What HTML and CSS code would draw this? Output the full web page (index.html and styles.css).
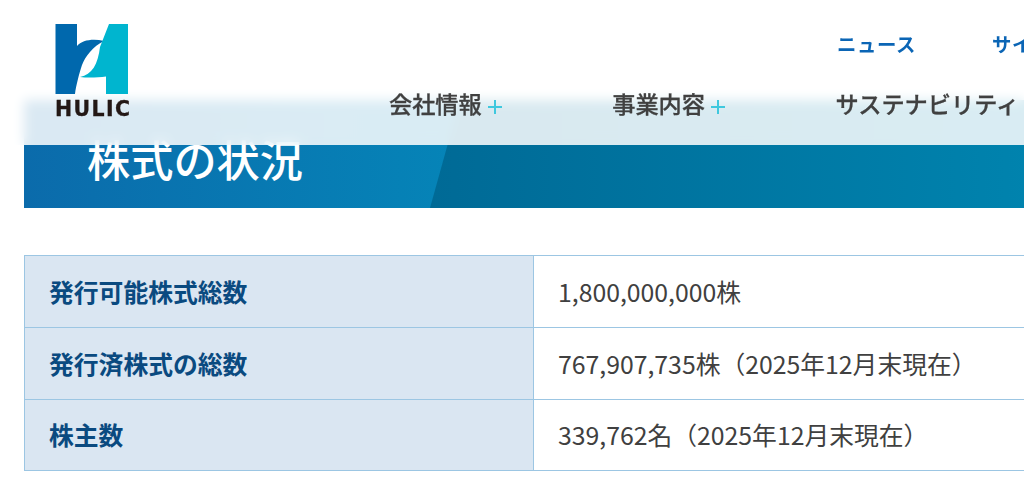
FILE: index.html
```html
<!DOCTYPE html>
<html lang="ja">
	<head>
		<meta charset="utf-8">
		<title>株式の状況</title>
		<link rel="stylesheet" href="styles.css">
		<meta name="viewport" content="width=device-width, initial-scale=1.0">
	</head>
	<body>
		<header class="site-header">
			<a class="logo" href="#">
				<svg class="logo-mark" viewBox="0 0 73 70" width="73" height="70">
					<path fill="#0068ad" d="M0.5 0H22V22C27 16 38 14.5 49 17C38 22 30 33 27 41C24 50 21 62 20 70H0.5Z"/>
					<path fill="#00b5cf" d="M54 0H73V70H51V52.5C43 53.5 33 54 25 53C37 51 43 40 45 23Z"/>
				</svg>
				<span class="logo-name">HULIC</span>
			</a>
			<div class="header-right">
				<ul class="top-links">
					<li><a href="#">ニュース</a></li>
					<li><a href="#">サイトマップ</a></li>
				</ul>
				<ul class="global-nav">
					<li><a href="#">会社情報<span class="plus"></span></a></li>
					<li><a href="#">事業内容<span class="plus"></span></a></li>
					<li><a href="#">サステナビリティ</a></li>
				</ul>
			</div>
		</header>

		<main class="content">
			<div class="page-title">
				<h1>株式の状況</h1>
			</div>

			<table class="stock-table">
				<tr>
					<th>発行可能株式総数</th>
					<td>1,800,000,000株</td>
				</tr>
				<tr>
					<th>発行済株式の総数</th>
					<td>767,907,735株（2025年12月末現在）</td>
				</tr>
				<tr class="last-row">
					<th>株主数</th>
					<td>339,762名（2025年12月末現在）</td>
				</tr>
			</table>
		</main>
	</body>
</html>
```

FILE: styles.css
```css
html, body {
	margin: 0;
	height: 100%;
	overflow: hidden;
	background-color: #fff;
}

body {
	font-family: "Noto Sans CJK JP", "Noto Sans", sans-serif;
	color: #333;
}

a {
	color: inherit;
	text-decoration: none;
}

ul {
	list-style: none;
	margin: 0;
	padding: 0;
}

/* header sits over the banner, the blur makes the pale band */
.site-header {
	position: absolute;
	top: 0;
	left: 0;
	z-index: 2;
	width: 1400px;
	height: 145px;
	display: flex;
	background-color: rgba(255, 255, 255, 0.85);
	backdrop-filter: blur(6px);
}

.logo {
	display: block;
	margin: 24px 0 0 55px;
	width: 74px;
}

.logo-mark {
	display: block;
}

.logo-name {
	display: block;
	margin-top: 5px;
	font-family: "DejaVu Sans", sans-serif;
	font-size: 20.5px;
	font-weight: bold;
	line-height: 21px;
	letter-spacing: 1.4px;
	color: #231815;
	-webkit-text-stroke: 0.3px #231815;
	white-space: nowrap;
}

.header-right {
	margin-left: 260px;
}

.top-links {
	display: flex;
	gap: 76px;
	margin: 29px 0 0 448px;
	font-size: 19.4px;
	font-weight: bold;
	line-height: 30px;
	letter-spacing: 0.6px;
	color: #0b65b5;
	white-space: nowrap;
}

.global-nav {
	display: flex;
	gap: 110.5px;
	margin-top: 29px;
	font-size: 23.2px;
	font-weight: 500;
	line-height: 30px;
	color: #404040;
	-webkit-text-stroke: 0.3px #404040;
	white-space: nowrap;
}

.plus {
	display: inline-block;
	width: 14px;
	height: 14px;
	margin-left: 6px;
	vertical-align: -1px;
	background:
		linear-gradient(#3fc8de, #3fc8de) center / 100% 2px no-repeat,
		linear-gradient(#3fc8de, #3fc8de) center / 2px 100% no-repeat;
}

.content {
	width: 1300px;
	padding: 100px 0 0 24px;
}

.page-title {
	position: relative;
	height: 108px;
	background: linear-gradient(90deg, #0b6bab 0, #0585b8 445px);
	overflow: hidden;
}

.page-title::after {
	content: "";
	position: absolute;
	top: 0;
	left: 406px;
	width: 1000px;
	height: 100%;
	background: linear-gradient(90deg, #006a96 0, #0083ae 600px, #0083ae 100%);
	clip-path: polygon(30px 0, 100% 0, 100% 100%, 0 100%);
}

.page-title h1 {
	margin: 0;
	padding: 30px 0 0 63px;
	font-size: 43.2px;
	font-weight: 500;
	line-height: 56px;
	color: #fff;
}

.stock-table {
	width: 100%;
	margin-top: 47px;
	border-collapse: collapse;
	font-size: 24.8px;
	line-height: 36px;
}

.stock-table th,
.stock-table td {
	height: 72px;
	padding: 0 24px 2px;
	box-sizing: border-box;
	border: 1px solid #9cc6e3;
	text-align: left;
}

.stock-table .last-row th,
.stock-table .last-row td {
	height: 71px;
}

.stock-table th {
	width: 509px;
	background-color: #dae6f2;
	color: #0a4a80;
	font-weight: bold;
}

.stock-table td {
	color: #404040;
	font-weight: 400;
}
```
